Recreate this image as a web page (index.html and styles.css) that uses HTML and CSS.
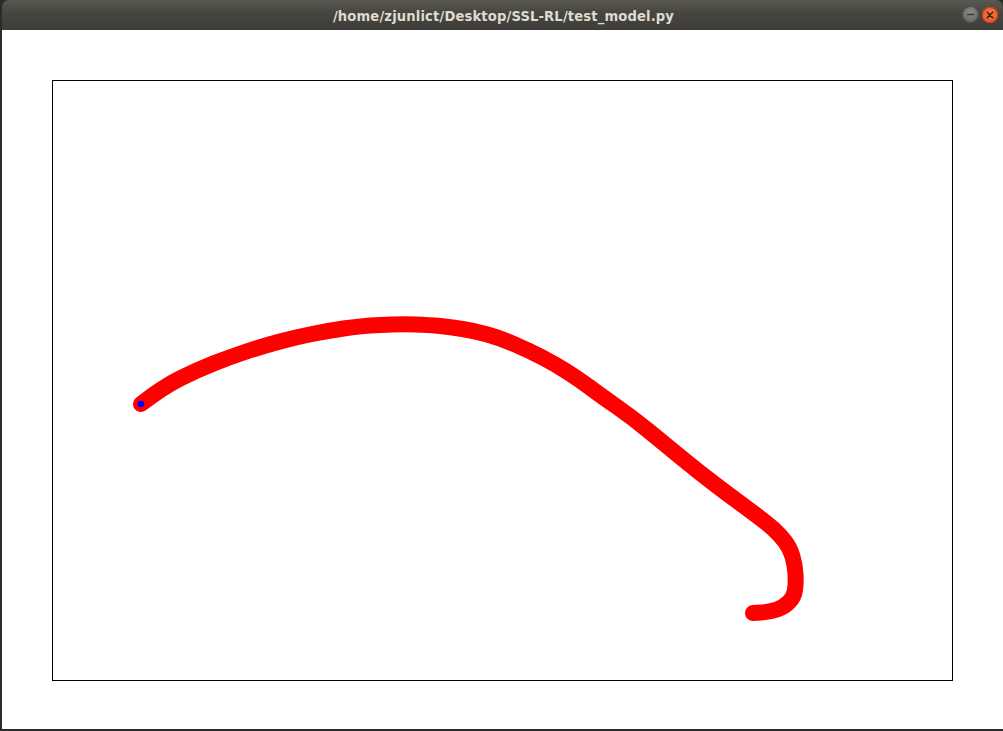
FILE: index.html
```html
<!DOCTYPE html>
<html>
<head>
<meta charset="utf-8">
<link rel="stylesheet" href="styles.css">
</head>
<body>
<div class="desktop">
  <div class="window">
    <div class="titlebar">
      <div class="title">/home/zjunlict/Desktop/SSL-RL/test_model.py</div>
      <div class="controls">
        <span class="btn btn-min"><svg width="17" height="17" viewBox="0 0 17 17"><line x1="5" y1="8.5" x2="12" y2="8.5" stroke="#3a3935" stroke-width="1.4"/></svg></span>
        <span class="btn btn-close"><svg width="16" height="16" viewBox="0 0 16 16"><path d="M5.3 5.3 L10.7 10.7 M10.7 5.3 L5.3 10.7" stroke="#3a1a0c" stroke-width="1.5" stroke-linecap="round"/></svg></span>
      </div>
    </div>
    <div class="content">
      <div class="plot">
        <svg class="trace" width="899" height="599" viewBox="53 81 899 599">
          <path fill="none" stroke="#ff0000" stroke-width="16" stroke-linecap="round" stroke-linejoin="round"
            d="M141,404 Q163,387 180,378.5 Q197,370 213.5,363.5 Q230,357 246.5,351.5 Q263,346 280,341.5 Q297,337 312,334 Q327,331 343.5,328.5 Q360,326 380,325 Q400,324 415,324.5 Q430,325 440,326 Q450,327 462.5,329 Q475,331 487.5,334.5 Q500,338 515,344.5 Q530,351 542.5,357.5 Q555,364 567.5,372 Q580,380 590,387.5 Q600,395 616.5,406.5 Q633,418 650,432 Q667,446 683.5,459.5 Q700,473 716.5,485.5 Q733,498 750,510.5 Q767,523 773.5,529 Q780,535 785,541.5 Q790,548 792.5,556.5 Q795,565 795.5,574 Q796,583 795,590 Q794,597 789,602 Q784,607 777,609.5 Q770,612 761.5,612.5 L753,613"/>
          <circle cx="141" cy="404" r="3.3" fill="#0000ff"/>
        </svg>
      </div>
    </div>
  </div>
</div>
</body>
</html>
```

FILE: styles.css
```css
html, body {
  margin: 0;
  padding: 0;
}
body {
  background: #2b2b2b;
  width: 1003px;
  height: 731px;
  overflow: hidden;
}
.desktop {
  display: flex;
  padding-left: 2px;
  height: 731px;
  box-sizing: border-box;
}
.window {
  width: 1001px;
  height: 729px;
  display: flex;
  flex-direction: column;
}
.titlebar {
  height: 30px;
  flex: none;
  background: linear-gradient(#5a5852, #47463f 40%, #3e3d39);
  border-radius: 7px 7px 0 0;
  position: relative;
  display: flex;
  align-items: center;
  justify-content: center;
}
.title {
  font-family: "DejaVu Sans Condensed", "DejaVu Sans", sans-serif;
  font-stretch: condensed;
  font-weight: bold;
  font-size: 14.6px;
  color: #dfdbd2;
  letter-spacing: 0.15px;
  margin-left: 2px;
}
.controls {
  position: absolute;
  right: 5px;
  top: 6px;
  display: flex;
  align-items: center;
  gap: 3px;
}
.btn {
  display: flex;
  border-radius: 50%;
}
.btn-min {
  width: 17px;
  height: 17px;
  background: radial-gradient(circle at 50% 35%, #8a8985, #5f5e5a);
  box-shadow: inset 0 0 0 1px #4a4945;
}
.btn-close {
  width: 16px;
  height: 16px;
  background: radial-gradient(circle at 50% 35%, #f77a48, #e2501d);
  box-shadow: inset 0 0 0 1px #c2431a;
}
.content {
  flex: 1;
  background: #ffffff;
  padding: 50px 0 0 50px;
}
.plot {
  width: 901px;
  height: 601px;
  box-sizing: border-box;
  border: 1px solid #000000;
  position: relative;
}
.trace {
  position: absolute;
  left: 0;
  top: 0;
  display: block;
}
```
